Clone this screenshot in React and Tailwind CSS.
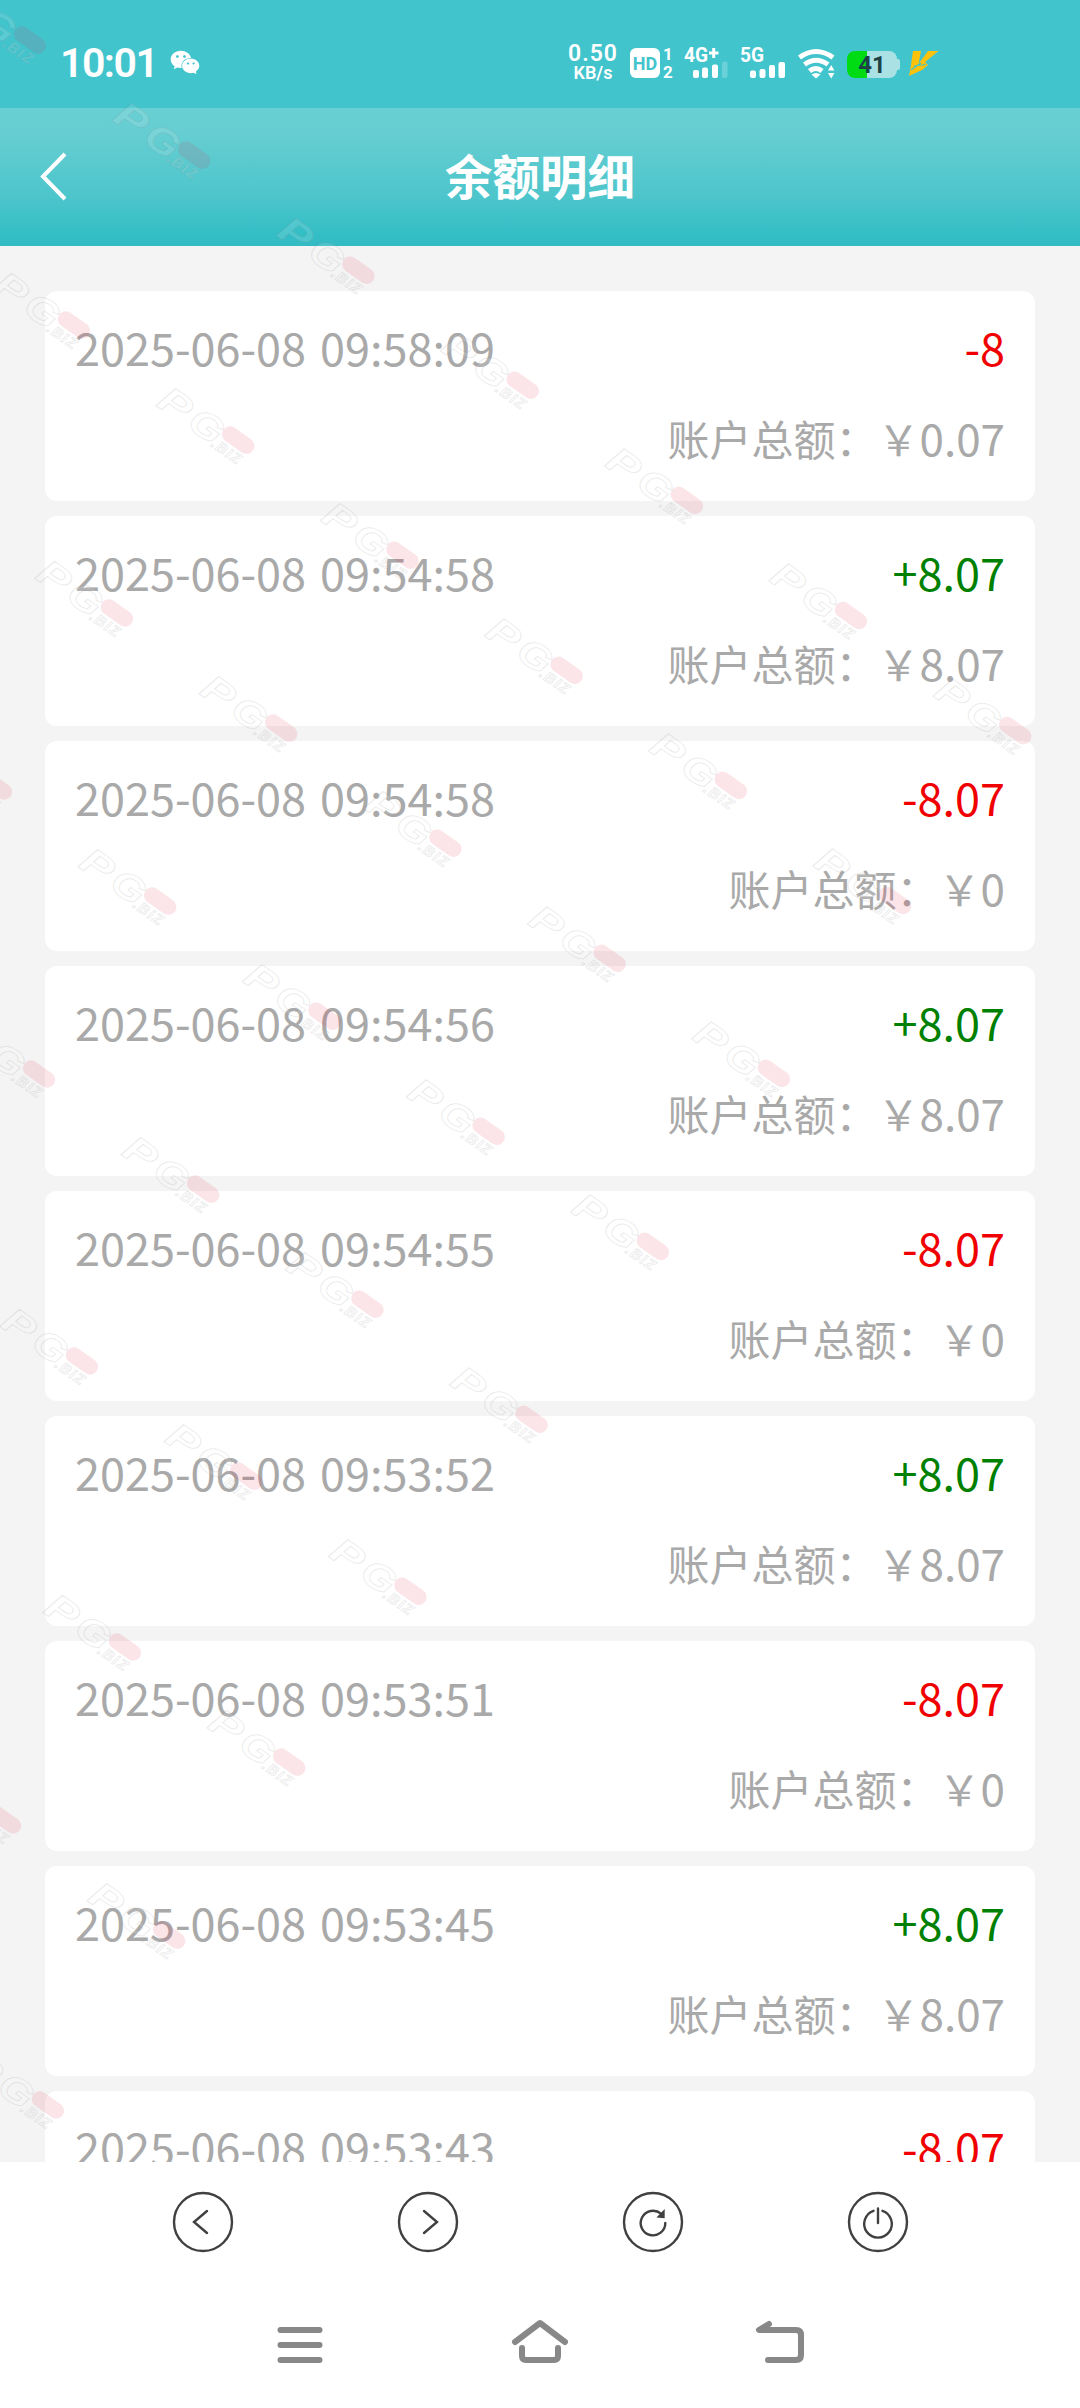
import React from "react";
import { FaWeixin } from "react-icons/fa";

const records = [
  { time: "2025-06-08 09:58:09", amount: "-8", total: "0.07" },
  { time: "2025-06-08 09:54:58", amount: "+8.07", total: "8.07" },
  { time: "2025-06-08 09:54:58", amount: "-8.07", total: "0" },
  { time: "2025-06-08 09:54:56", amount: "+8.07", total: "8.07" },
  { time: "2025-06-08 09:54:55", amount: "-8.07", total: "0" },
  { time: "2025-06-08 09:53:52", amount: "+8.07", total: "8.07" },
  { time: "2025-06-08 09:53:51", amount: "-8.07", total: "0" },
  { time: "2025-06-08 09:53:45", amount: "+8.07", total: "8.07" },
  { time: "2025-06-08 09:53:43", amount: "-8.07", total: "0" },
];

// Each run of stamps starts at [x, y] and steps diagonally down the page.
const stampRuns = [
  [30, 40, 7],
  [74, 325, 6],
  [117, 613, 5],
  [-4, 786, 5],
  [39, 1074, 4],
  [82, 1361, 3],
  [125, 1647, 2],
  [5, 1820, 2],
  [48, 2105, 1],
];

const stamps = stampRuns.flatMap(([x, y, n]) =>
  Array.from({ length: n }, (_, i) => [x + i * 164.2, y + i * 115.1])
);

function Watermark() {
  return (
    <svg className="pointer-events-none absolute inset-0" width="1080" height="2408" viewBox="0 0 1080 2408">
      {stamps.map(([x, y], i) => (
        <g key={i} transform={`translate(${x} ${y}) rotate(35)`} fontFamily="Liberation Sans, sans-serif" fontWeight="bold" fontStyle="italic">
          <g fill="#ffffff" fillOpacity="0.12" stroke="#888888" strokeOpacity="0.17" strokeWidth="1">
            <text x="-88" y="19" fontSize="37" textLength="32" lengthAdjust="spacingAndGlyphs">P</text>
            <text x="-51" y="19" fontSize="37" textLength="34" lengthAdjust="spacingAndGlyphs">G</text>
            <text x="-20" y="21" fontSize="15" letterSpacing="1.5">.BIZ</text>
          </g>
          <rect x="-18" y="-8" width="36" height="16" rx="8" fill="#dc3250" fillOpacity="0.125" />
        </g>
      ))}
    </svg>
  );
}

function StatusBar() {
  return (
    <div className="flex h-[108px] items-start bg-[#42c4cd] pl-[60px] font-[Roboto,sans-serif] text-white">
      <div className="mt-[43px] w-[110px] text-[41px] leading-[40px] font-semibold tracking-[-1.5px]">10:01</div>
      <FaWeixin className="mt-[49px] h-[27px] w-[30px]" />
      <div className="mt-[42px] ml-[368px] flex w-[50px] flex-col items-center font-semibold">
        <span className="text-[23px] leading-[23px] tracking-[1px]">0.50</span>
        <span className="mt-[-1px] text-[18px] leading-[18px]">KB/s</span>
      </div>
      <div className="mt-[48px] ml-[12px] flex h-[30px] w-[30px] items-center justify-center rounded-[6px] bg-white text-[18px] font-bold text-[#42c4cd]">HD</div>
      <div className="mt-[45px] ml-[2px] flex w-[12px] flex-col items-center text-[17px] leading-[18px] font-bold">
        <span>1</span>
        <span>2</span>
      </div>
      <svg className="mt-[38px] ml-[9px]" width="47" height="42" viewBox="683 38 47 42" fill="currentColor">
        <text x="684" y="62" fontSize="20" fontWeight="bold" textLength="24" lengthAdjust="spacingAndGlyphs">4G</text>
        <path d="M709 53h9.500M713.700 48v10" stroke="currentColor" strokeWidth="3" />
        <rect x="693" y="70" width="6" height="8" rx="2" />
        <rect x="702" y="67.500" width="6" height="10.500" rx="2" />
        <rect x="712" y="64.500" width="6" height="13.500" rx="2" />
        <rect x="722" y="61.500" width="5.500" height="16.500" rx="2" opacity="0.22" />
      </svg>
      <svg className="mt-[38px] ml-[9px]" width="48" height="42" viewBox="739 38 48 42" fill="currentColor">
        <text x="740" y="62" fontSize="20" fontWeight="bold" textLength="24" lengthAdjust="spacingAndGlyphs">5G</text>
        <rect x="750" y="70.500" width="6" height="7.500" rx="2" />
        <rect x="759.500" y="69" width="6" height="9" rx="2" />
        <rect x="769" y="65" width="6" height="13" rx="2" />
        <rect x="778.500" y="62" width="6.500" height="16" rx="2" />
      </svg>
      <svg className="mt-[46px] ml-[10px]" width="40" height="34" viewBox="797 46 40 34" fill="none" stroke="currentColor" strokeWidth="5">
        <path d="M799.500 57.500Q816 45.500 833 57.500" />
        <path d="M804.500 64.500Q816 56 828 64.500" />
        <path d="M809.500 71Q816 66 822 71" />
        <path d="M811.500 74.500L816 78.500L820.500 74.500Q816 71.500 811.500 74.500Z" fill="currentColor" stroke="none" />
        <path d="M828 70.500L831.200 65L834.400 70.500ZM828 73L831.200 78.500L834.400 73Z" fill="currentColor" stroke="none" />
      </svg>
      <div className="mt-[51px] ml-[10px] flex items-center">
        <div className="flex h-[27px] w-[50px] items-center justify-center rounded-[8px] bg-[linear-gradient(90deg,#00dc14_41%,#a9e1e5_41%)] text-[24px] font-bold text-[#1d4246]">41</div>
        <div className="h-[11px] w-[3px] rounded-r-[2px] bg-[#a9e1e5]" />
      </div>
      <svg className="mt-[50px] ml-[8px]" width="32" height="28" viewBox="908 50 32 28" fill="#ffc20a">
        <path d="M913 51H921L918.500 64L928 51H938.500L925 62L928 65L922 70L909 76L911 65Z" />
        <path d="M911 70L921 63M914 66L926 64.500" stroke="#42c4cd" strokeWidth="1.200" />
      </svg>
    </div>
  );
}

function Record({ time, amount, total }) {
  return (
    <div className="h-[210px] shrink-0 rounded-[12px] bg-white px-[30px] py-[11px]">
      <div className="flex h-[90px] items-center justify-between text-[45px]">
        <span className="text-[#a9a9a9] [word-spacing:4px]">{time}</span>
        <span className={amount[0] === "+" ? "text-[#008000]" : "text-[#f00000]"}>{amount}</span>
      </div>
      <div className="flex h-[90px] items-baseline justify-end text-[42px] leading-[90px] text-[#a9a9a9]">
        <span>账户总额：￥</span>
        <span className="text-[44px]">{total}</span>
      </div>
    </div>
  );
}

function RoundButton({ children }) {
  return (
    <button className="flex items-center justify-center">
      <svg width="64" height="64" viewBox="0 0 64 64" fill="none" stroke="#404040" strokeWidth="2.400" strokeLinecap="round">
        <circle cx="32" cy="32" r="29" />
        {children}
      </svg>
    </button>
  );
}

export default function App() {
  return (
    <div className="relative flex h-[2408px] w-[1080px] flex-col overflow-hidden bg-white font-['Noto_Sans_CJK_SC',sans-serif]">
      <StatusBar />
      <header className="grid h-[138px] grid-cols-3 items-center bg-[linear-gradient(180deg,#68cfd3_0%,#66ced2_18%,#4cc5cb_65%,#33bec6_92%,#34bbc4_100%)] text-white">
        <svg className="ml-[38px]" width="32" height="52" viewBox="0 0 32 52" fill="none" stroke="currentColor" strokeWidth="4">
          <path d="M27 3L5 25.500L27 48" />
        </svg>
        <h1 className="mt-[-5px] text-center text-[47.500px] font-bold whitespace-nowrap">余额明细</h1>
      </header>
      <main className="flex h-[1916px] flex-col gap-[15px] overflow-hidden bg-[#f4f4f4] px-[45px] pt-[45px]">
        {records.map((r, i) => (
          <Record key={i} {...r} />
        ))}
      </main>
      <div className="grid h-[120px] grid-cols-4 px-[90px]">
        <RoundButton>
          <path d="M36 21L23 32L36 43" />
        </RoundButton>
        <RoundButton>
          <path d="M28 21L41 32L28 43" />
        </RoundButton>
        <RoundButton>
          <path d="M44.300 33A12.300 12.300 0 1 1 40 23.700" />
          <path d="M38 26.500L42.500 22V27Z" fill="#404040" />
        </RoundButton>
        <RoundButton>
          <path d="M27.500 20.800A13.800 13.800 0 1 0 36.500 20.800M32 18.500V33" />
        </RoundButton>
      </div>
      <nav className="grid h-[126px] grid-cols-3 items-center justify-items-center px-[180px]" aria-label="system">
        <svg width="60" height="60" viewBox="270 2315 60 60" fill="none" stroke="#888888" strokeWidth="6" strokeLinecap="round">
          <path d="M280.500 2330H319.500M280.500 2345H319.500M280.500 2360H319.500" />
        </svg>
        <svg width="60" height="60" viewBox="510 2315 60 60" fill="none" stroke="#888888" strokeWidth="6" strokeLinecap="round" strokeLinejoin="round">
          <path d="M515 2342L540 2323L565 2342M522 2348V2356Q522 2360 526 2360H554Q558 2360 558 2356V2348" />
        </svg>
        <svg width="60" height="60" viewBox="750 2315 60 60" fill="none" stroke="#888888" strokeWidth="6" strokeLinecap="round" strokeLinejoin="round">
          <path d="M769 2324L759 2330H796Q801 2330 801 2335V2355Q801 2360 796 2360H768" />
        </svg>
      </nav>
      <Watermark />
    </div>
  );
}
